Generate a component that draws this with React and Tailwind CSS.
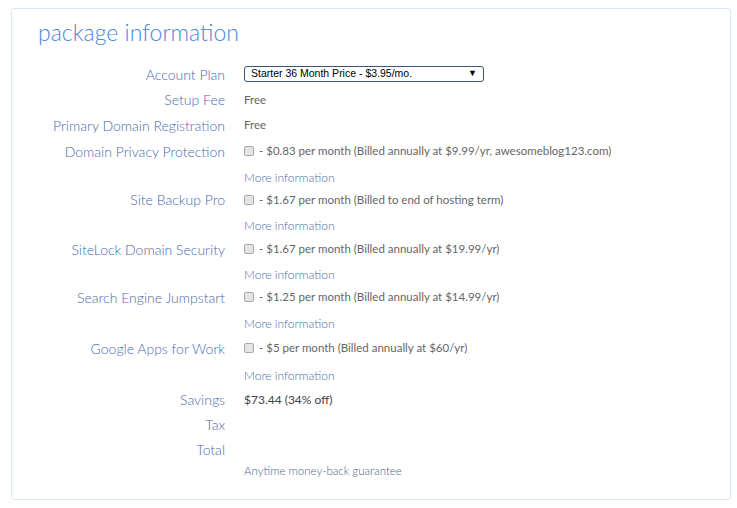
import React from 'react';

const options = [
  { label: 'Domain Privacy Protection', text: '- $0.83 per month (Billed annually at $9.99/yr, awesomeblog123.com)', h: 'h-[26px]', mh: 'h-[24px]' },
  { label: 'Site Backup Pro', text: '- $1.67 per month (Billed to end of hosting term)', h: 'h-[23px]', mh: 'h-[26px]' },
  { label: 'SiteLock Domain Security', text: '- $1.67 per month (Billed annually at $19.99/yr)', h: 'h-[24px]', mh: 'h-[24px]' },
  { label: 'Search Engine Jumpstart', text: '- $1.25 per month (Billed annually at $14.99/yr)', h: 'h-[24px]', mh: 'h-[26px]' },
  { label: 'Google Apps for Work', text: '- $5 per month (Billed annually at $60/yr)', h: 'h-[26px]', mh: 'h-[26px]' },
];

const Row = ({ label, height, children }) => (
  <div className={`flex items-center ${height}`}>
    <div className="w-[213px] shrink-0 text-right text-[14px] font-light text-[#4a6aae]">{label}</div>
    <div className="pl-[19px] text-[11.5px] text-[#666]">{children}</div>
  </div>
);

const Check = () => (
  <span className="inline-block w-[10px] h-[10px] mr-[5px] align-[-1px] rounded-[2px] border border-[#a9a9a9] bg-[#e4e4e4]" />
);

const App = () => {
  return (
    <div className="pt-[8px] pl-[11px] pb-[10px]" style={{ fontFamily: 'Lato, "Open Sans", sans-serif' }}>
      <div className="w-[720px] border border-[#d9e8f5] rounded-[3px] bg-white pb-[18px]">
        <div className="h-[52px] pl-[26px] pt-[8px]">
          <h1 className="text-[23px] leading-[30px] font-light text-[#4b86d3]">package information</h1>
        </div>

        <Row label="Account Plan" height="h-[26px]">
          <div className="w-[240px] h-[16px] flex items-center justify-between pl-[6px] pr-[6px] border border-[#3b5679] rounded-[3px] text-[10.5px] text-black" style={{ fontFamily: '"Liberation Sans", Arial, sans-serif' }}>
            <span>Starter 36 Month Price - $3.95/mo.</span>
            <span className="text-[9px]">▼</span>
          </div>
        </Row>
        <Row label="Setup Fee" height="h-[25px]">Free</Row>
        <Row label="Primary Domain Registration" height="h-[26px]">Free</Row>

        {options.map((o) => (
          <React.Fragment key={o.label}>
            <Row label={o.label} height={o.h}>
              <Check />
              {o.text}
            </Row>
            <Row label="" height={o.mh}>
              <span className="block pt-[4px] text-[12px] text-[#4d6ca6] font-light">More information</span>
            </Row>
          </React.Fragment>
        ))}

        <Row label="Savings" height="h-[25px]">
          <span className="text-[12px] text-[#444]">$73.44 (34% off)</span>
        </Row>
        <Row label="Tax" height="h-[25px]" />
        <Row label="Total" height="h-[24px]" />
        <Row label="" height="h-[20px]">
          <span className="text-[11.5px] text-[#4a5f8a] font-light">Anytime money-back guarantee</span>
        </Row>
      </div>
    </div>
  );
};

export default App;
